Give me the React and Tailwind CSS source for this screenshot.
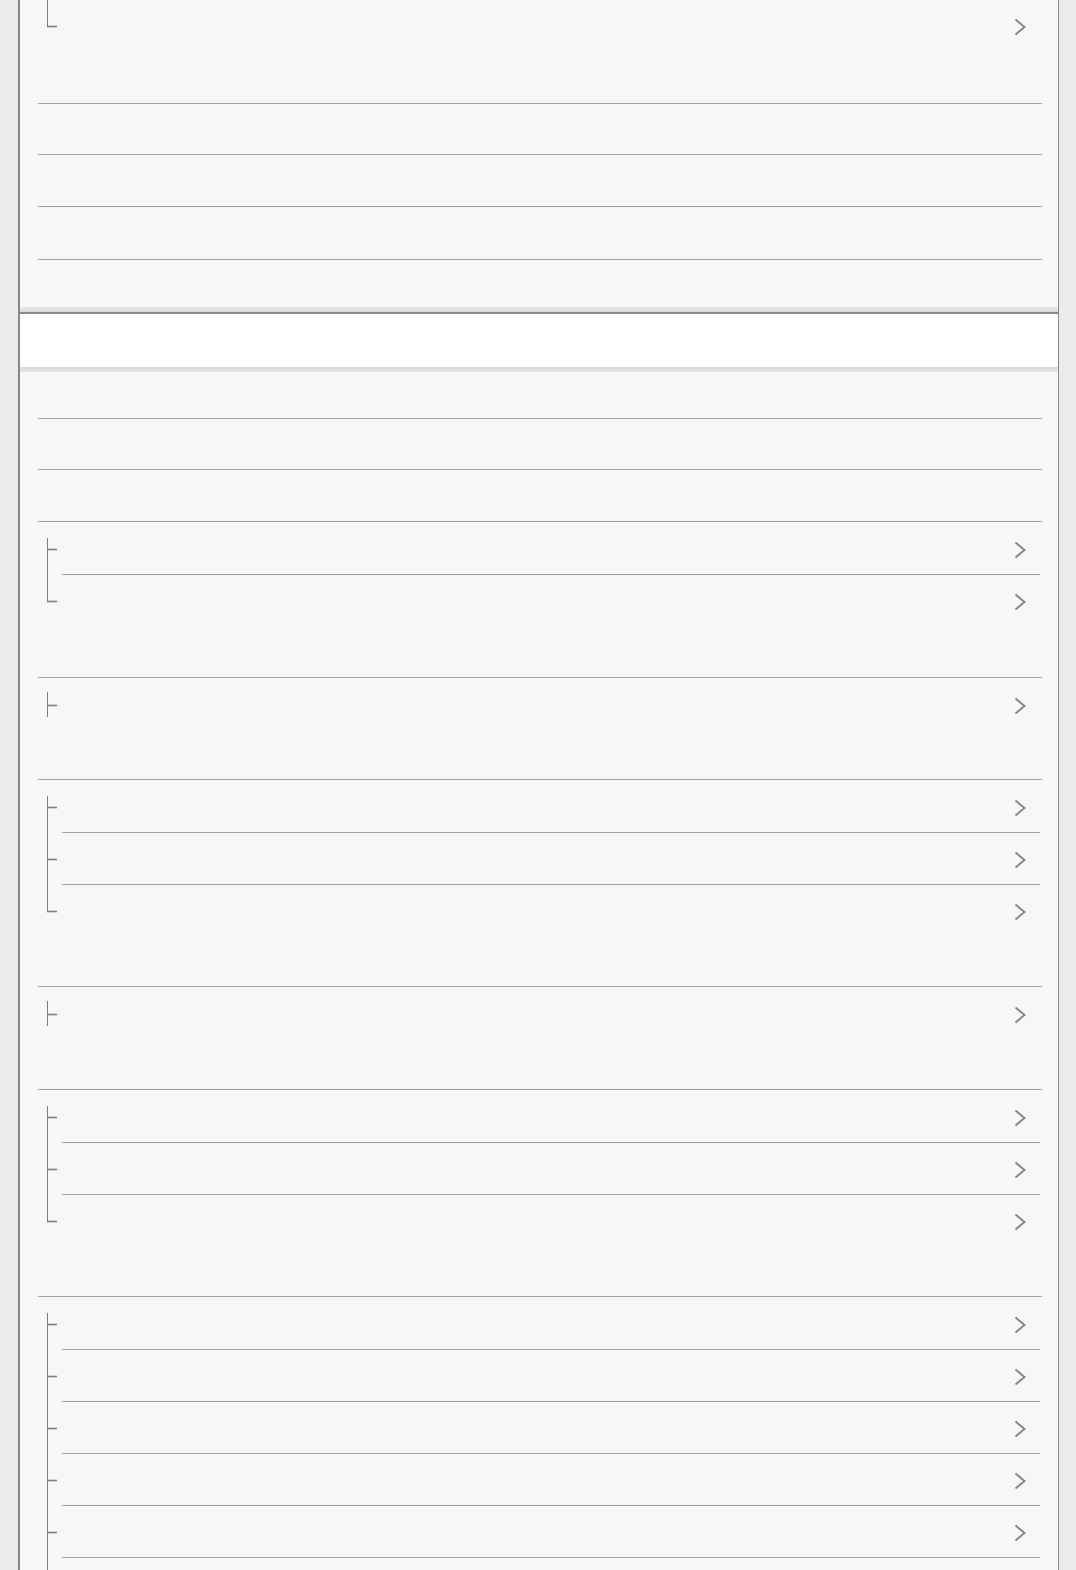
const Chevron = () => (
  <svg width="12" height="18" viewBox="0 0 12 18" className="shrink-0">
    <polyline points="1.5,1.5 10.5,9 1.5,16.5" fill="none" stroke="#858585" strokeWidth="1.9" />
  </svg>
);

// tree connector drawn beside each sub row
const Branch = ({ kind }) => {
  const spans = {
    first: [15, 52],
    mid: [0, 52],
    last: [0, 27],
    single: [13, 38],
  };
  const [y1, y2] = spans[kind];
  return (
    <svg width="15" height="52" className="shrink-0">
      <line x1="0.5" y1={y1} x2="0.5" y2={y2} stroke="#7d7d7d" strokeWidth="1" />
      <line x1="0" y1="26.5" x2="10" y2="26.5" stroke="#7d7d7d" strokeWidth="1.6" />
    </svg>
  );
};

const SubRow = ({ kind, line }) => (
  <div className="flex h-[52px]">
    <Branch kind={kind} />
    <div
      className={`flex flex-1 items-center justify-end pt-[2px] pr-[14px] ${line ? "border-b border-[#a3a3a3]" : ""}`}
    >
      <Chevron />
    </div>
  </div>
);

const Group = ({ count, open, tail, pad = "h-[49px]", top = "pt-[1px]" }) => {
  const kinds = Array.from({ length: count }, (_, i) => {
    if (tail && i === count - 1) return "last";
    if (count === 1 && !open) return "single";
    if (i === 0 && !tail) return "first";
    if (i === count - 1 && !open) return "last";
    return "mid";
  });
  return (
    <div className={`${top} ${open ? "" : "border-b border-[#a3a3a3]"}`}>
      <div className="pl-[9px] pr-[2px]">
        {kinds.map((k, i) => (
          <SubRow key={i} kind={k} line={open || i < count - 1} />
        ))}
      </div>
      {!open && <div className={pad} />}
    </div>
  );
};

const EmptyRow = ({ h = "h-[52px]" }) => <div className={`${h} border-b border-[#a3a3a3]`} />;

export default function App() {
  return (
    <div className="h-[1570px] overflow-hidden bg-[#ebebeb] pl-[18px] pr-[17px]">
      <div className="h-full border-l-2 border-r border-[#888] bg-[#f7f7f7]">
        {/* top list section */}
        <div className="bg-[linear-gradient(to_top,#dadada,#e8e8e8_5px,#f7f7f7_5px)] pb-[52px] pl-[18px] pr-[16px]">
          <Group count={1} tail top="" pad="h-[51px]" />
          <EmptyRow h="h-[51px]" />
          <EmptyRow />
          <EmptyRow h="h-[53px]" />
        </div>

        {/* header bar */}
        <div className="h-[55px] border-t-2 border-[#888] bg-white" />

        {/* second list section */}
        <div className="bg-[linear-gradient(#d9d9d9,#e6e6e6_5px,#f7f7f7_5px)] pl-[18px] pr-[16px]">
          <EmptyRow />
          <EmptyRow h="h-[51px]" />
          <EmptyRow />
          <Group count={2} pad="h-[50px]" />
          <Group count={1} pad="h-[48px]" />
          <Group count={3} />
          <Group count={1} />
          <Group count={3} />
          <Group count={6} open />
        </div>
      </div>
    </div>
  );
}
